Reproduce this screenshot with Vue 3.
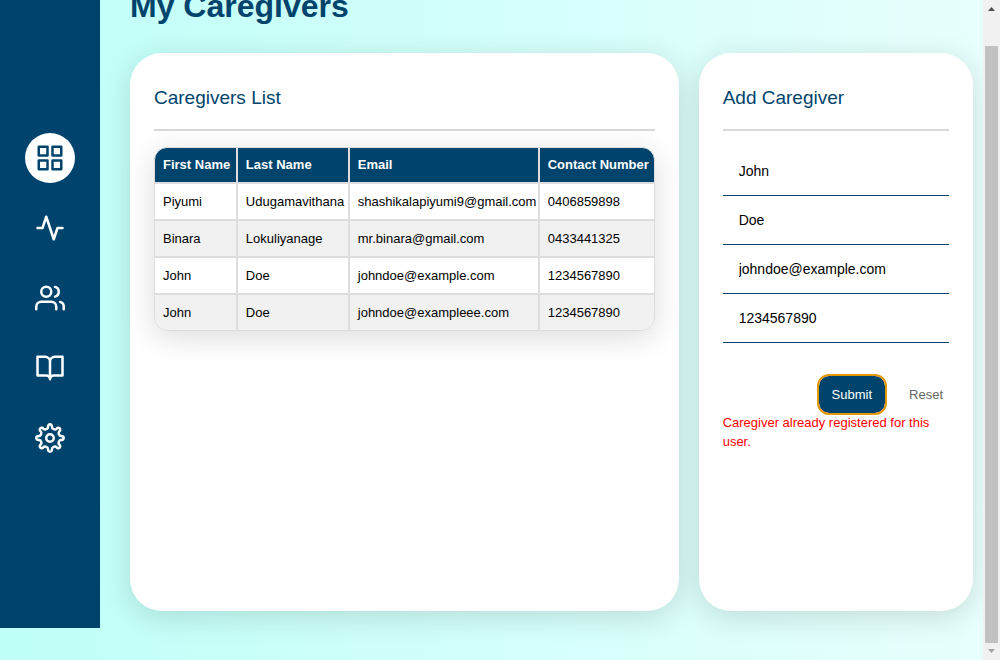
<script setup>
import { reactive, ref } from 'vue'

const columns = [
  { label: 'First Name', size: 'col-first' },
  { label: 'Last Name', size: 'col-last' },
  { label: 'Email', size: 'col-email' },
  { label: 'Contact Number', size: 'col-phone' }
]

const caregivers = ref([
  { first: 'Piyumi', last: 'Udugamavithana', email: 'shashikalapiyumi9@gmail.com', phone: '0406859898' },
  { first: 'Binara', last: 'Lokuliyanage', email: 'mr.binara@gmail.com', phone: '0433441325' },
  { first: 'John', last: 'Doe', email: 'johndoe@example.com', phone: '1234567890' },
  { first: 'John', last: 'Doe', email: 'johndoe@exampleee.com', phone: '1234567890' }
])

const fields = [
  { key: 'first', label: 'First Name', type: 'text' },
  { key: 'last', label: 'Last Name', type: 'text' },
  { key: 'email', label: 'Email', type: 'email' },
  { key: 'phone', label: 'Contact Number', type: 'tel' }
]

const form = reactive({ first: 'John', last: 'Doe', email: 'johndoe@example.com', phone: '1234567890' })
const error = ref('Caregiver already registered for this user.')

function submit() {
  if (caregivers.value.some((c) => c.email === form.email)) {
    error.value = 'Caregiver already registered for this user.'
    return
  }
  caregivers.value.push({ ...form })
  error.value = ''
}

function reset() {
  for (const f of fields) form[f.key] = ''
  error.value = ''
}
</script>

<template>
  <div class="app">
    <div class="page">
      <nav class="sidebar" aria-label="Main">
        <a href="#dashboard" class="nav-link active" aria-label="Dashboard">
          <svg viewBox="0 0 24 24"><path d="M3 3h7v7H3zM14 3h7v7h-7zM14 14h7v7h-7zM3 14h7v7H3z" /></svg>
        </a>
        <a href="#activity" class="nav-link" aria-label="Activity">
          <svg viewBox="0 0 24 24"><path d="M22 12h-4l-3 9L9 3l-3 9H2" /></svg>
        </a>
        <a href="#caregivers" class="nav-link" aria-label="Caregivers">
          <svg viewBox="0 0 24 24">
            <path d="M17 21v-2a4 4 0 0 0-4-4H5a4 4 0 0 0-4 4v2" />
            <circle cx="9" cy="7" r="4" />
            <path d="M23 21v-2a4 4 0 0 0-3-3.87M16 3.13a4 4 0 0 1 0 7.75" />
          </svg>
        </a>
        <a href="#guide" class="nav-link" aria-label="Guide">
          <svg viewBox="0 0 24 24"><path d="M2 3h6a4 4 0 0 1 4 4v14a3 3 0 0 0-3-3H2zM22 3h-6a4 4 0 0 0-4 4v14a3 3 0 0 1 3-3h7z" /></svg>
        </a>
        <a href="#settings" class="nav-link" aria-label="Settings">
          <svg viewBox="0 0 24 24">
            <circle cx="12" cy="12" r="3" />
            <path d="M10.500 2.800A1.520 1.520 0 1 1 13.500 2.800A2.300 2.300 0 0 0 17.440 4.430A1.520 1.520 0 1 1 19.570 6.560A2.300 2.300 0 0 0 21.200 10.500A1.520 1.520 0 1 1 21.200 13.500A2.300 2.300 0 0 0 19.570 17.440A1.520 1.520 0 1 1 17.440 19.570A2.300 2.300 0 0 0 13.500 21.200A1.520 1.520 0 1 1 10.500 21.200A2.300 2.300 0 0 0 6.560 19.570A1.520 1.520 0 1 1 4.430 17.440A2.300 2.300 0 0 0 2.800 13.500A1.520 1.520 0 1 1 2.800 10.500A2.300 2.300 0 0 0 4.430 6.560A1.520 1.520 0 1 1 6.560 4.430A2.300 2.300 0 0 0 10.500 2.800z" />
          </svg>
        </a>
      </nav>

      <main class="content">
        <h1>My Caregivers</h1>
        <div class="cards">
          <section class="card">
            <h2>Caregivers List</h2>
            <table>
              <colgroup>
                <col v-for="c in columns" :key="c.label" :class="c.size" />
              </colgroup>
              <thead>
                <tr><th v-for="c in columns" :key="c.label" scope="col">{{ c.label }}</th></tr>
              </thead>
              <tbody>
                <tr v-for="c in caregivers" :key="c.email">
                  <td>{{ c.first }}</td>
                  <td>{{ c.last }}</td>
                  <td>{{ c.email }}</td>
                  <td>{{ c.phone }}</td>
                </tr>
              </tbody>
            </table>
          </section>

          <section class="card">
            <h2>Add Caregiver</h2>
            <form novalidate @submit.prevent="submit">
              <input
                v-for="f in fields"
                :key="f.key"
                v-model="form[f.key]"
                :type="f.type"
                :name="f.key"
                :aria-label="f.label"
              />
              <div class="actions">
                <button type="submit" class="submit">Submit</button>
                <button type="button" class="reset" @click="reset">Reset</button>
              </div>
              <p v-if="error" class="error" role="alert">{{ error }}</p>
            </form>
          </section>
        </div>
      </main>
    </div>

    <div class="scrollbar" aria-hidden="true">
      <svg viewBox="0 0 17 17"><path d="M5 11h7L8.500 7z" fill="#505050" /></svg>
      <div class="track"><div class="thumb"></div></div>
      <svg viewBox="0 0 17 17"><path d="M5 6h7L8.500 10z" fill="#a3a3a3" /></svg>
    </div>
  </div>
</template>

<style>
body {
  margin: 0;
}
</style>

<style scoped>
* {
  box-sizing: border-box;
}
.app {
  display: flex;
  height: 100vh;
  overflow: hidden;
  font-family: "Liberation Sans", Arial, sans-serif;
  background: linear-gradient(to right, #bffff8, #e8fffd);
}
.page {
  flex: 1;
  min-width: 0;
  display: flex;
  align-items: flex-start;
  margin-top: -32px;
}
.sidebar {
  flex: none;
  width: 100px;
  height: 100vh;
  display: flex;
  flex-direction: column;
  align-items: center;
  justify-content: center;
  gap: 20px;
  background: #00446d;
}
.nav-link {
  width: 50px;
  height: 50px;
  display: flex;
  align-items: center;
  justify-content: center;
  border-radius: 50%;
  color: #fff;
}
.nav-link.active {
  background: #fff;
  color: #00446d;
}
.nav-link svg {
  width: 30px;
  height: 30px;
  overflow: visible;
  fill: none;
  stroke: currentColor;
  stroke-width: 2;
  stroke-linecap: round;
  stroke-linejoin: round;
}
.content {
  flex: 1;
  min-width: 0;
  padding: 20px 10px 49px 30px;
}
h1 {
  margin: 0 0 29px;
  font-size: 32px;
  line-height: 36px;
  color: #00446d;
}
.cards {
  display: grid;
  grid-template-columns: 2fr 1fr;
  gap: 20px;
}
.card {
  min-width: 0;
  min-height: calc(100vh - 102px);
  padding: 24px;
  border-radius: 32px;
  background: #fff;
  box-shadow: 0 6px 30px rgba(0, 0, 0, 0.14);
}
h2 {
  margin: 0 0 16px;
  padding: 10px 0 21px;
  border-bottom: 2px solid #d9d9d9;
  font-size: 19px;
  line-height: 21px;
  font-weight: 400;
  color: #00446d;
}
table {
  width: 100%;
  border-collapse: separate;
  border-spacing: 0;
  border-radius: 13px;
  overflow: hidden;
  font-size: 13px;
  box-shadow: 0 6px 30px rgba(0, 0, 0, 0.14);
}
.col-first {
  width: 83px;
}
.col-last {
  width: 112px;
}
.col-email {
  width: 190px;
}
.col-phone {
  width: 116px;
}
th,
td {
  padding: 8px 0 8px 8px;
  border: 1px solid #ddd;
  text-align: left;
  line-height: 19px;
  white-space: nowrap;
}
th {
  line-height: 18px;
  background: #00446d;
  color: #fff;
}
th:first-child {
  border-top-left-radius: 13px;
}
th:last-child {
  border-top-right-radius: 13px;
}
tbody tr:last-child td:first-child {
  border-bottom-left-radius: 13px;
}
tbody tr:last-child td:last-child {
  border-bottom-right-radius: 13px;
}
tbody tr {
  background: #fff;
}
tbody tr:nth-child(even) {
  background: #f1f1f1;
}
input {
  display: block;
  width: 100%;
  height: 49px;
  padding: 16px;
  border: 0;
  border-bottom: 1px solid #00446d;
  background: transparent;
  color: #000;
  font: 14px "Liberation Sans", Arial, sans-serif;
  outline: 0;
}
.actions {
  display: flex;
  justify-content: flex-end;
  align-items: center;
  gap: 18px;
  padding-top: 33px;
}
button {
  font: 13px "Liberation Sans", Arial, sans-serif;
  cursor: pointer;
}
.submit {
  height: 37px;
  padding: 0 13px;
  border: 0;
  border-radius: 10px;
  outline: 2px solid #e59700;
  background: #00446d;
  color: #fff;
}
.reset {
  padding: 6px;
  border: 0;
  background: none;
  color: #666;
}
.error {
  margin: 0;
  font-size: 13px;
  line-height: 19px;
  color: #f00;
}
.scrollbar {
  flex: none;
  width: 17px;
  display: flex;
  flex-direction: column;
  background: #f1f1f1;
}
.scrollbar svg {
  display: block;
  width: 17px;
  height: 17px;
}
.track {
  flex: 1;
  display: flex;
  padding: 29px 2px 0;
}
.thumb {
  flex: 1;
  background: #c1c1c1;
}
</style>
